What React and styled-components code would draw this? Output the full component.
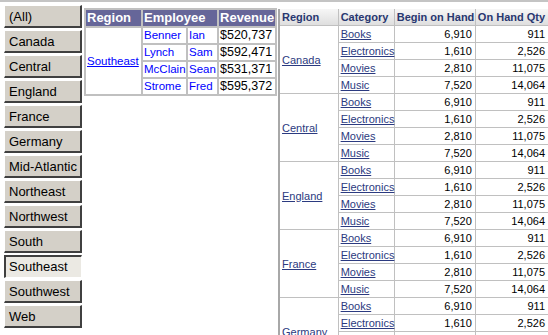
import React from "react";
import styled, { createGlobalStyle } from "styled-components";

const GlobalStyle = createGlobalStyle`
  html, body {
    margin: 0;
    padding: 0;
    overflow: hidden;
    background: #ffffff;
    font-family: "Liberation Sans", Arial, sans-serif;
  }
`;

const Page = styled.div`
  display: flex;
  align-items: flex-start;
  border-top: 2px solid #c4c4c4;
  height: 333px;
  overflow: hidden;
`;

const SlicerList = styled.div`
  display: flex;
  flex-direction: column;
  gap: 2px;
  padding: 3px 0 0 4px;
`;

const SlicerButton = styled.div`
  box-sizing: border-box;
  width: 78px;
  height: 23px;
  padding: 2px 0 0 4px;
  font-size: 13px;
  line-height: 17px;
  color: #000;
  white-space: nowrap;
  background: ${(p) => (p.$active ? "#ebe9e3" : "#d4d0c8")};
  border-style: solid;
  border-width: 1px 2px 2px 1px;
  border-color: ${(p) =>
    p.$active
      ? "#404040 #ffffff #ffffff #404040"
      : "#ffffff #404040 #404040 #ffffff"};
  ${(p) => p.$active && "border-width: 2px 1px 1px 2px; padding: 1px 0 0 3px;"}
`;

const EmpTable = styled.table`
  flex-shrink: 0;
  width: 193px;
  margin: 6px 0 0 2px;
  border-collapse: separate;
  border-spacing: 2px;
  background: #c0c0c0;
  table-layout: fixed;
  font-size: 12px;
`;

const EmpHead = styled.th`
  background: #666699;
  color: #ffffff;
  font-weight: bold;
  font-size: 13px;
  text-align: left;
  height: 16px;
  padding: 0 1px;
  line-height: 16px;
  white-space: nowrap;
  overflow: hidden;
`;

const EmpCell = styled.td`
  background: #ffffff;
  height: 15px;
  padding: 0 0 0 1px;
  line-height: 15px;
  font-size: ${(p) => (p.$money ? "12.5px" : "11.5px")};
  color: ${(p) => (p.$money ? "#000" : "#0000ff")};
  white-space: nowrap;
  overflow: hidden;
`;

const RegionLink = styled.a`
  color: ${(p) => p.$color || "#0000ff"};
  text-decoration: underline;
`;

const StockTable = styled.table`
  flex-shrink: 0;
  margin: 7px 0 0 1px;
  border-collapse: collapse;
  table-layout: fixed;
  width: 271px;
  font-size: 11px;
  border-left: 2px solid #a8a8a8;
  border-right: 1px solid #c0c0c0;
`;

const StockHead = styled.th`
  height: 16px;
  padding: 0 2px;
  text-align: left;
  font-weight: bold;
  color: #283770;
  white-space: nowrap;
  overflow: hidden;
  background: linear-gradient(#f6f6f6, #dedede);
  border: 1px solid #c0c0c0;
  border-top: none;
`;

const StockCell = styled.td`
  height: 16px;
  padding: 0 ${(p) => (p.$num ? "3px" : "2px")} 0 2px;
  text-align: ${(p) => (p.$num ? "right" : "left")};
  vertical-align: middle;
  color: #000;
  border: 1px solid #c0c0c0;
  white-space: nowrap;
  line-height: 16px;
`;

const regions = [
  "(All)", "Canada", "Central", "England", "France", "Germany",
  "Mid-Atlantic", "Northeast", "Northwest", "South", "Southeast",
  "Southwest", "Web",
];

const employees = [
  ["Benner", "Ian", "$520,737"],
  ["Lynch", "Sam", "$592,471"],
  ["McClain", "Sean", "$531,371"],
  ["Strome", "Fred", "$595,372"],
];

const categories = [
  ["Books", "6,910", "911"],
  ["Electronics", "1,610", "2,526"],
  ["Movies", "2,810", "11,075"],
  ["Music", "7,520", "14,064"],
];

const stockRegions = ["Canada", "Central", "England", "France", "Germany"];

export default function App() {
  return (
    <>
      <GlobalStyle />
      <Page>
        <SlicerList>
          {regions.map((r) => (
            <SlicerButton key={r} $active={r === "Southeast"}>
              {r}
            </SlicerButton>
          ))}
        </SlicerList>

        <EmpTable>
          <colgroup>
            <col style={{ width: 55 }} />
            <col style={{ width: 43 }} />
            <col style={{ width: 29 }} />
            <col style={{ width: 56 }} />
          </colgroup>
          <thead>
            <tr>
              <EmpHead>Region</EmpHead>
              <EmpHead colSpan={2}>Employee</EmpHead>
              <EmpHead>Revenue</EmpHead>
            </tr>
          </thead>
          <tbody>
            {employees.map(([last, first, rev], i) => (
              <tr key={last}>
                {i === 0 && (
                  <EmpCell rowSpan={4}>
                    <RegionLink href="#">Southeast</RegionLink>
                  </EmpCell>
                )}
                <EmpCell>{last}</EmpCell>
                <EmpCell>{first}</EmpCell>
                <EmpCell $money>{rev}</EmpCell>
              </tr>
            ))}
          </tbody>
        </EmpTable>

        <StockTable>
          <colgroup>
            <col style={{ width: 59 }} />
            <col style={{ width: 56 }} />
            <col style={{ width: 81 }} />
            <col style={{ width: 73 }} />
          </colgroup>
          <thead>
            <tr>
              <StockHead>Region</StockHead>
              <StockHead>Category</StockHead>
              <StockHead>Begin on Hand</StockHead>
              <StockHead>On Hand Qty</StockHead>
            </tr>
          </thead>
          <tbody>
            {stockRegions.map((region) =>
              categories.map(([cat, begin, qty], i) => (
                <tr key={region + cat}>
                  {i === 0 && (
                    <StockCell rowSpan={4}>
                      <RegionLink href="#" $color="#2b3a80">
                        {region}
                      </RegionLink>
                    </StockCell>
                  )}
                  <StockCell>
                    <RegionLink href="#" $color="#2b3a80">
                      {cat}
                    </RegionLink>
                  </StockCell>
                  <StockCell $num>{begin}</StockCell>
                  <StockCell $num>{qty}</StockCell>
                </tr>
              ))
            )}
          </tbody>
        </StockTable>
      </Page>
    </>
  );
}
